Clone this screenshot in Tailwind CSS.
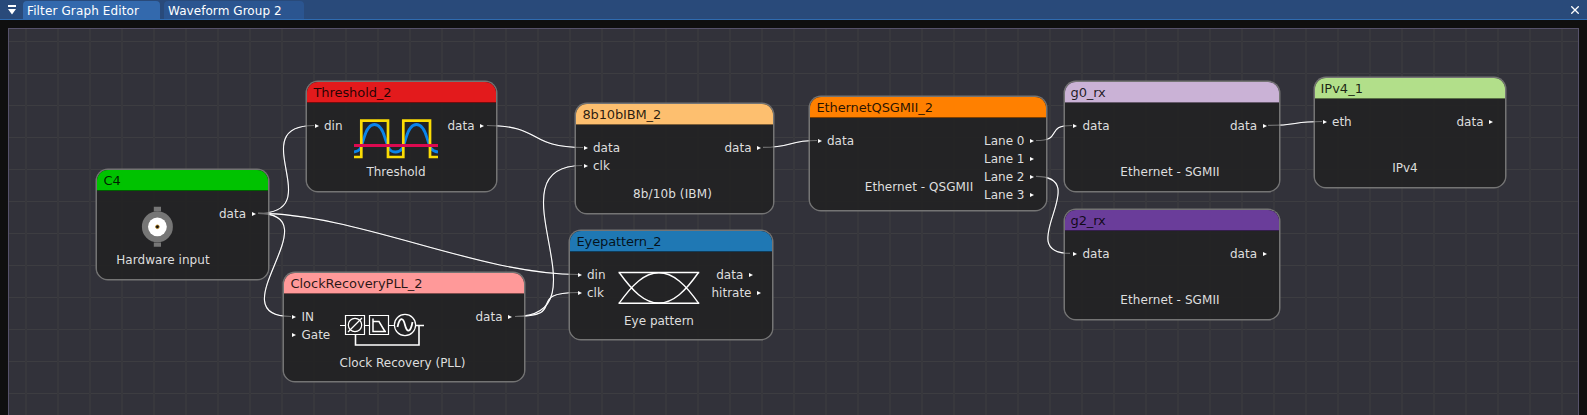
<!DOCTYPE html>
<html lang="en">
<head>
<meta charset="utf-8">
<title>Filter Graph Editor</title>
<script src="https://cdn.jsdelivr.net/npm/@tailwindcss/browser@4"></script>
</head>
<body class="flex h-[415px] w-[1587px] flex-col overflow-hidden bg-[#0f0f0f] font-['DejaVu_Sans',sans-serif] text-[12px] leading-[14px] text-[#dedede]">

<svg class="hidden">
  <symbol id="arrow" viewBox="0 0 4 4"><path d="M0 0L4 2L0 4Z" fill="#fff"/></symbol>
</svg>

<!-- Tab bar -->
<header class="flex h-5 shrink-0 items-end border-b border-[#2f6bb0] bg-[#294a7a] pl-2 text-white">
  <svg class="mb-1 mr-[7px] h-[11px] w-2" viewBox="0 0 8 11"><path d="M0 1h8v2H0zM0 5h8L4 10.5z" fill="#fff"/></svg>
  <div class="h-[18px] w-[137px] rounded-t bg-[#3369ad] pl-1 pt-[3px] tracking-[0.13px]">Filter Graph Editor</div>
  <div class="ml-1 h-[18px] w-[140px] rounded-t bg-[#2b5590] pl-1 pt-[3px] tracking-[0.06px]">Waveform Group 2</div>
  <svg class="mb-[5px] ml-auto mr-2 size-2" viewBox="0 0 8 8"><path d="M.3.3l7.4 7.4M7.7.3L.3 7.7" stroke="#fff" stroke-width="1.3"/></svg>
</header>

<!-- Graph canvas -->
<main class="mx-2 mt-2 grow border border-b-0 border-[#56526a] bg-[#32323a] bg-[linear-gradient(to_right,#38383d_2px,transparent_2px),linear-gradient(to_bottom,#3d3d41_1px,transparent_1px)] bg-[length:32px_32px] bg-[position:16px_0,0_12px]">

  <svg class="absolute left-0 top-0" width="1587" height="415" fill="none" stroke="#fff" stroke-width="1.1">
    <g id="links">
      <path d="M258 213.4C330 213.4 242 125.5 314 125.5"/>
      <path d="M258 213.4C334 213.4 215 316.5 291 316.5"/>
      <path d="M258 213.4C358 213.4 478 274.5 578 274.5"/>
      <path d="M487 125.5C543 125.5 527 147.5 583 147.5"/>
      <path d="M515 316.5C610 316.5 487 165.5 582 165.5"/>
      <path d="M515 316.5C570 316.5 523 292.5 578 292.5"/>
      <path d="M763 147.4C793 147.4 787 140.5 817 140.5"/>
      <path d="M1036 140.5C1064 140.5 1044 125.5 1072 125.5"/>
      <path d="M1036 176.4C1095 176.4 1011 253.4 1070 253.4"/>
      <path d="M1268 125.4C1298 125.4 1292 121.5 1322 121.5"/>
    </g>
  </svg>

  <!-- C4 -->
  <section class="absolute left-[97px] top-[170px] h-[108.5px] w-[170.5px] overflow-hidden rounded-[11px] bg-[#232324]/95 shadow-[0_0_0_1.5px_#747474]">
    <h2 class="h-[21px] border-b border-black/50 bg-[#00c200] pl-[6.5px] text-[13px] leading-[22px] text-black/85">C4</h2>
    <div class="flex">
      <div class="w-[10px] shrink-0"></div>
      <div class="flex w-[112px] shrink-0 flex-col items-center">
        <div class="h-[62px] w-full pl-[34px] pt-[15px]">
          <svg width="32" height="42" viewBox="0 0 32 42"><path d="M12.8.8h7.2v4.400h-7.2zM12.8 36.600h7.2v4.200h-7.2z" fill="#767676"/><circle cx="16.400" cy="20.800" r="15.500" fill="#767676"/><circle cx="16.400" cy="20.800" r="9.400" fill="#fff"/><circle cx="16.400" cy="20.800" r="1.800" fill="#111" stroke="#b07a10" stroke-width=".8"/></svg>
        </div>
        <p class="whitespace-nowrap tracking-[0.06px]">Hardware input</p>
      </div>
      <ul class="mt-[14px] flex grow flex-col items-end pr-3 leading-[18px]">
        <li class="flex items-center gap-[5.5px]">data<svg class="mb-px size-1"><use href="#arrow"/></svg></li>
      </ul>
    </div>
  </section>

  <!-- Threshold_2 -->
  <section class="absolute left-[307px] top-[82px] h-[108.5px] w-[189px] overflow-hidden rounded-[11px] bg-[#232324]/95 shadow-[0_0_0_1.5px_#747474]">
    <h2 class="h-[21px] border-b border-black/50 bg-[#e31a1c] pl-[6.5px] text-[13px] leading-[22px] tracking-[-0.08px] text-black/85">Threshold_2</h2>
    <div class="flex">
      <ul class="mt-[14px] w-[44px] shrink-0 pl-[7.5px] leading-[18px]">
        <li class="flex items-center gap-[5.5px]"><svg class="mb-px size-1"><use href="#arrow"/></svg>din</li>
      </ul>
      <div class="flex w-[90px] shrink-0 flex-col items-center">
        <div class="h-[62px] pt-[15px]">
          <svg width="84" height="42" viewBox="354 118 84 42" fill="none">
            <path d="M354 152C362 151 361 146 364 138C369 120 380 120 385 138C389 150 390 152 395.700 152C401 152 403 149 406 138C411 120 422 120 427 138C430 148 431 151 438 152" stroke="#0a84ea" stroke-width="2.800"/>
            <path d="M354 157H361.300V120.700H388V157H403.300V120.700H430V157H438" stroke="#fbdc04" stroke-width="2.700"/>
            <path d="M354 145.400H438" stroke="#dc0a50" stroke-width="3"/>
          </svg>
        </div>
        <p class="whitespace-nowrap">Threshold</p>
      </div>
      <ul class="mt-[14px] flex grow flex-col items-end pr-3 leading-[18px]">
        <li class="flex items-center gap-[5.5px]">data<svg class="mb-px size-1"><use href="#arrow"/></svg></li>
      </ul>
    </div>
  </section>

  <!-- ClockRecoveryPLL_2 -->
  <section class="absolute left-[284px] top-[273px] h-[108px] w-[240px] overflow-hidden rounded-[11px] bg-[#232324]/95 shadow-[0_0_0_1.5px_#747474]">
    <h2 class="h-[21px] border-b border-black/50 bg-[#ff9999] pl-[6.5px] text-[13px] leading-[22px] tracking-[-0.04px] text-black/85">ClockRecoveryPLL_2</h2>
    <div class="flex">
      <ul class="mt-[14px] w-[55px] shrink-0 pl-[8px] leading-[18px]">
        <li class="flex items-center gap-[5.5px]"><svg class="mb-px size-1"><use href="#arrow"/></svg>IN</li>
        <li class="flex items-center gap-[5.5px]"><svg class="mb-px size-1"><use href="#arrow"/></svg>Gate</li>
      </ul>
      <div class="flex w-[127px] shrink-0 flex-col items-center">
        <div class="h-[62px] w-full pl-px pt-[18px]">
          <svg width="84" height="36" viewBox="340 312 84 36" fill="none" stroke="#fff" stroke-width="1.2">
            <path d="M345.5 315.5h19v19h-19zM369.5 315.5h19v19h-19zM340 325.5h5M365 325.5h4M389 325.5h5"/>
            <circle cx="355" cy="325" r="6.7"/><path d="M348 332L362 318"/>
            <path d="M373 318.5V331.5H386M373 321.5H379L385 331.5" stroke-width="1.5"/>
            <circle cx="405" cy="325" r="10.6"/>
            <path d="M397.5 327C399.5 317 403 317 405 325S410.5 333 412.5 322" stroke-width="1.8"/>
            <path d="M415.5 325.5H424" stroke-width="1.6"/><path d="M355.5 335V345H419V325.5" stroke-width="1.6"/>
          </svg>
        </div>
        <p class="whitespace-nowrap">Clock Recovery (PLL)</p>
      </div>
      <ul class="mt-[14px] flex grow flex-col items-end pr-3 leading-[18px]">
        <li class="flex items-center gap-[5.5px]">data<svg class="mb-px size-1"><use href="#arrow"/></svg></li>
      </ul>
    </div>
  </section>

  <!-- 8b10bIBM_2 -->
  <section class="absolute left-[576px] top-[104px] h-[108.5px] w-[197px] overflow-hidden rounded-[11px] bg-[#232324]/95 shadow-[0_0_0_1.5px_#747474]">
    <h2 class="h-[21px] border-b border-black/50 bg-[#fdbf6f] pl-[6.5px] text-[13px] leading-[22px] tracking-[-0.15px] text-black/85">8b10bIBM_2</h2>
    <div class="flex">
      <ul class="mt-[14px] w-[50px] shrink-0 pl-[7.5px] leading-[18px]">
        <li class="flex items-center gap-[5.5px]"><svg class="mb-px size-1"><use href="#arrow"/></svg>data</li>
        <li class="flex items-center gap-[5.5px]"><svg class="mb-px size-1"><use href="#arrow"/></svg>clk</li>
      </ul>
      <p class="w-[93px] shrink-0 whitespace-nowrap pt-[62px] text-center tracking-[0.12px]">8b/10b (IBM)</p>
      <ul class="mt-[14px] flex grow flex-col items-end pr-3 leading-[18px]">
        <li class="flex items-center gap-[5.5px]">data<svg class="mb-px size-1"><use href="#arrow"/></svg></li>
      </ul>
    </div>
  </section>

  <!-- Eyepattern_2 -->
  <section class="absolute left-[570px] top-[231px] h-[108px] w-[202px] overflow-hidden rounded-[11px] bg-[#232324]/95 shadow-[0_0_0_1.5px_#747474]">
    <h2 class="h-[21px] border-b border-black/50 bg-[#1f78b4] pl-[6.5px] text-[13px] leading-[22px] tracking-[-0.12px] text-black/85">Eyepattern_2</h2>
    <div class="flex">
      <ul class="mt-[14px] w-[44px] shrink-0 pl-[7.5px] leading-[18px]">
        <li class="flex items-center gap-[5.5px]"><svg class="mb-px size-1"><use href="#arrow"/></svg>din</li>
        <li class="flex items-center gap-[5.5px]"><svg class="mb-px size-1"><use href="#arrow"/></svg>clk</li>
      </ul>
      <div class="flex w-[90px] shrink-0 flex-col items-center">
        <div class="h-[62px] pt-[19px]">
          <svg width="82" height="34" viewBox="618.5 271 82 34" fill="none" stroke="#fff" stroke-width="1.5">
            <path d="M619 272.5H699.8M619 303.3H699.8"/>
            <path d="M619.7 272.5C633 291 645 303 659.4 303S686 291 699 272.5M619.7 303.2C633 284.5 645 272.7 659.4 272.7S686 284.5 699 303.2" stroke-width="1.4"/>
          </svg>
        </div>
        <p class="whitespace-nowrap">Eye pattern</p>
      </div>
      <ul class="mt-[14px] flex grow flex-col items-center pr-1 leading-[18px]">
        <li class="-ml-[3px] flex items-center gap-[5.5px]">data<svg class="mb-px size-1"><use href="#arrow"/></svg></li>
        <li class="flex items-center gap-[5px]">hitrate<svg class="mb-px size-1"><use href="#arrow"/></svg></li>
      </ul>
    </div>
  </section>

  <!-- EthernetQSGMII_2 -->
  <section class="absolute left-[810px] top-[97px] h-[112.5px] w-[236px] overflow-hidden rounded-[11px] bg-[#232324]/95 shadow-[0_0_0_1.5px_#747474]">
    <h2 class="h-[21px] border-b border-black/50 bg-[#ff8000] pl-[6.5px] text-[13px] leading-[22px] tracking-[-0.12px] text-black/85">EthernetQSGMII_2</h2>
    <div class="flex">
      <ul class="mt-[14px] w-[50px] shrink-0 pl-[7.5px] leading-[18px]">
        <li class="flex items-center gap-[5.5px]"><svg class="mb-px size-1"><use href="#arrow"/></svg>data</li>
      </ul>
      <p class="w-[118px] shrink-0 whitespace-nowrap pt-[62px] text-center tracking-[0.06px]">Ethernet - QSGMII</p>
      <ul class="mt-[14px] flex grow flex-col items-end pr-3 leading-[18px]">
        <li class="flex items-center gap-[5.5px]">Lane 0<svg class="mb-px size-1"><use href="#arrow"/></svg></li>
        <li class="flex items-center gap-[5.5px]">Lane 1<svg class="mb-px size-1"><use href="#arrow"/></svg></li>
        <li class="flex items-center gap-[5.5px]">Lane 2<svg class="mb-px size-1"><use href="#arrow"/></svg></li>
        <li class="flex items-center gap-[5.5px]">Lane 3<svg class="mb-px size-1"><use href="#arrow"/></svg></li>
      </ul>
    </div>
  </section>

  <!-- g0_rx -->
  <section class="absolute left-[1065px] top-[82px] h-[108.5px] w-[213.5px] overflow-hidden rounded-[11px] bg-[#232324]/95 shadow-[0_0_0_1.5px_#747474]">
    <h2 class="h-[21px] border-b border-black/50 bg-[#cab2d6] pl-[5.5px] text-[13px] leading-[22px] tracking-[-0.1px] text-black/85">g0_rx</h2>
    <div class="flex">
      <ul class="mt-[14px] w-[50px] shrink-0 pl-[8px] leading-[18px]">
        <li class="flex items-center gap-[5.5px]"><svg class="mb-px size-1"><use href="#arrow"/></svg>data</li>
      </ul>
      <p class="w-[110px] shrink-0 whitespace-nowrap pt-[62px] text-center tracking-[0.08px]">Ethernet - SGMII</p>
      <ul class="mt-[14px] flex grow flex-col items-end pr-3 leading-[18px]">
        <li class="flex items-center gap-[5.5px]">data<svg class="mb-px size-1"><use href="#arrow"/></svg></li>
      </ul>
    </div>
  </section>

  <!-- g2_rx -->
  <section class="absolute left-[1065px] top-[210px] h-[108.5px] w-[213.5px] overflow-hidden rounded-[11px] bg-[#232324]/95 shadow-[0_0_0_1.5px_#747474]">
    <h2 class="h-[21px] border-b border-black/50 bg-[#6a3d9a] pl-[5.5px] text-[13px] leading-[22px] tracking-[-0.1px] text-black/85">g2_rx</h2>
    <div class="flex">
      <ul class="mt-[14px] w-[50px] shrink-0 pl-[8px] leading-[18px]">
        <li class="flex items-center gap-[5.5px]"><svg class="mb-px size-1"><use href="#arrow"/></svg>data</li>
      </ul>
      <p class="w-[110px] shrink-0 whitespace-nowrap pt-[62px] text-center tracking-[0.08px]">Ethernet - SGMII</p>
      <ul class="mt-[14px] flex grow flex-col items-end pr-3 leading-[18px]">
        <li class="flex items-center gap-[5.5px]">data<svg class="mb-px size-1"><use href="#arrow"/></svg></li>
      </ul>
    </div>
  </section>

  <!-- IPv4_1 -->
  <section class="absolute left-[1315px] top-[78px] h-[108.5px] w-[190px] overflow-hidden rounded-[11px] bg-[#232324]/95 shadow-[0_0_0_1.5px_#747474]">
    <h2 class="h-[21px] border-b border-black/50 bg-[#b2df8a] pl-[5.5px] text-[13px] leading-[22px] text-black/85">IPv4_1</h2>
    <div class="flex">
      <ul class="mt-[14px] w-[50px] shrink-0 pl-[7.5px] leading-[18px]">
        <li class="flex items-center gap-[5.5px]"><svg class="mb-px size-1"><use href="#arrow"/></svg>eth</li>
      </ul>
      <p class="w-[80px] shrink-0 whitespace-nowrap pt-[62px] text-center">IPv4</p>
      <ul class="mt-[14px] flex grow flex-col items-end pr-3 leading-[18px]">
        <li class="flex items-center gap-[5.5px]">data<svg class="mb-px size-1"><use href="#arrow"/></svg></li>
      </ul>
    </div>
  </section>

  <!-- Faint continuation of each link over the node edges -->
  <svg class="absolute left-0 top-0 opacity-30" width="1587" height="415" fill="none" stroke="#fff" stroke-width="1.1"><use href="#links"/></svg>
</main>
</body>
</html>
